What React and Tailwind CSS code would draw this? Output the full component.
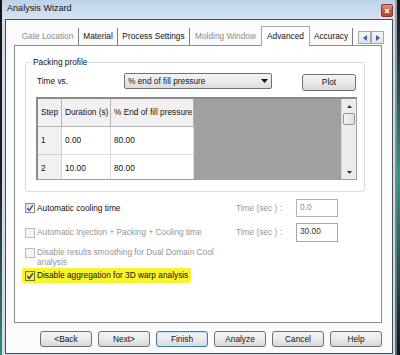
import React from "react";

const TABS = [
  { label: "Gate Location", cls: "w-[62px] border-r border-[#7d7d7d] text-[#8c8c8c]" },
  { label: "Material", cls: "w-[39px] border-r border-[#7d7d7d] text-[#111]" },
  { label: "Process Settings", cls: "w-[72px] border-r border-[#7d7d7d] text-[#111]" },
  { label: "Molding Window", cls: "w-[71px] text-[#8c8c8c]" },
];

const ROWS = [
  { step: "1", dur: "0.00", pct: "80.00" },
  { step: "2", dur: "10.00", pct: "80.00" },
];

const Check = ({ checked = false, disabled = false, onYellow = false }) => {
  const box = disabled
    ? "border-[#bcbcbc] bg-[#f5f5f5]"
    : onYellow
    ? "border-[#77772e] bg-[#eeee5a]"
    : "border-[#8e8f8f] bg-gradient-to-br from-[#dadada] to-[#fcfcfc]";
  return (
    <span className={`flex h-[10px] w-[10px] shrink-0 items-center justify-center border ${box}`}>
      {checked && (
        <svg width="8" height="8" viewBox="0 0 8 8">
          <path
            d="M1.2 4.1 L3.2 6.3 L6.9 1.3"
            fill="none"
            stroke={onYellow ? "#3b3b12" : "#2a4ea6"}
            strokeWidth="1.4"
          />
        </svg>
      )}
    </span>
  );
};

const Button = ({ children, focus = false }) => (
  <div
    className={`flex h-[16px] w-[52px] items-center justify-center rounded-[3px] border bg-gradient-to-b from-[#f4f4f4] via-[#ebebeb] to-[#d8d8d8] text-[#111] ${
      focus ? "border-[#3c7fb1] shadow-[inset_0_0_0_1px_#bfe3f7]" : "border-[#707070]"
    }`}
  >
    {children}
  </div>
);

const Arrow = ({ dir }) => (
  <div className="flex h-[13px] w-[13px] items-center justify-center border border-[#a9a9a9] bg-gradient-to-b from-[#f6f6f6] to-[#e3e3e3]">
    <svg width="4" height="6" viewBox="0 0 4 6">
      <path d={dir === "left" ? "M4 0 L0 3 L4 6 Z" : "M0 0 L4 3 L0 6 Z"} fill="#3363a8" />
    </svg>
  </div>
);

export default function App() {
  return (
    <div className="flex h-[355px] w-[400px] overflow-hidden bg-black font-['Liberation_Sans',Arial,sans-serif] text-[8.3px] leading-none">
      {/* desktop edge */}
      <div className="w-[2px] shrink-0 bg-gradient-to-b from-[#151515] via-[#1c1c1c] to-[#2f8d78]" />

      {/* window */}
      <div className="flex w-[393px] shrink-0 flex-col bg-[#d3dde8]">
        {/* title bar */}
        <div className="flex h-[19px] shrink-0 items-start justify-between bg-gradient-to-b from-[#bcd2ea] via-[#cadcef] to-[#d6e4f2] pl-[5px] pr-[2px]">
          <span className="mt-[4px] text-[9.1px] text-[#111]">Analysis Wizard</span>
          <div className="mt-[4px] flex h-[13px] w-[12px] items-center justify-center rounded-[2px] border border-[#8b3a2b] bg-gradient-to-b from-[#e8917c] via-[#d0563d] to-[#c1432c]">
            <svg width="6" height="6" viewBox="0 0 6 6">
              <path d="M1 1 L5 5 M5 1 L1 5" stroke="#fff" strokeWidth="1.5" />
            </svg>
          </div>
        </div>

        <div className="flex flex-1">
          <div className="w-[3px] shrink-0" />
          {/* client area */}
          <div className="flex h-[335px] w-[388px] shrink-0 flex-col border border-[#3f4d5c] bg-[#fbfbfb]">
            {/* tab strip */}
            <div className="ml-[11px] mt-[6px] flex h-[19px] items-end">
              {TABS.map((t) => (
                <div key={t.label} className={`flex h-[17px] items-center justify-center ${t.cls}`}>
                  {t.label}
                </div>
              ))}
              <div className="relative z-10 -mb-px flex h-[20px] w-[49px] items-center justify-center border border-b-0 border-[#a7a7a7] bg-white text-[#111]">
                Advanced
              </div>
              <div className="flex h-[17px] w-[43px] items-center justify-center border-r border-[#7d7d7d] text-[#111]">
                Accuracy
              </div>
              <div className="mb-[1px] ml-[5px] flex">
                <Arrow dir="left" />
                <Arrow dir="right" />
              </div>
            </div>

            {/* tab page */}
            <div className="ml-[8px] flex h-[278px] w-[368px] flex-col border border-[#8a8d94] bg-white">
              {/* packing profile group */}
              <div className="relative ml-[10px] mt-[16px] h-[130px] w-[340px] rounded-[3px] border border-[#d5dfe6]">
                <span className="absolute -top-[5px] left-[6px] bg-white px-[1px] text-[#111]">Packing profile</span>

                <div className="mt-[10px] flex h-[18px] items-start pl-[11px]">
                  <div className="flex h-[16px] w-[87px] items-center text-[#111]">Time vs.</div>
                  <div className="flex h-[16px] w-[148px] items-center justify-between rounded-[2px] border border-[#707070] bg-gradient-to-b from-[#f3f3f3] via-[#ececec] to-[#dcdcdc] pl-[3px] pr-[3px] text-[#111]">
                    <span>% end of fill pressure</span>
                    <svg width="7" height="4" viewBox="0 0 7 4">
                      <path d="M0 0 L7 0 L3.5 4 Z" fill="#111" />
                    </svg>
                  </div>
                  <div className="ml-[30px] mt-[1px]">
                    <div className="flex h-[17px] w-[54px] items-center justify-center rounded-[3px] border border-[#707070] bg-gradient-to-b from-[#f4f4f4] via-[#ebebeb] to-[#d8d8d8] text-[#111]">
                      Plot
                    </div>
                  </div>
                </div>

                {/* table */}
                <div className="ml-[10px] mt-[6px] flex h-[83px] w-[321px] overflow-hidden border-b border-l-2 border-r border-t-2 border-b-[#a0a0a0] border-l-[#8a8a8a] border-r-[#a0a0a0] border-t-[#8a8a8a] text-[#111]">
                  <div className="flex w-[156px] shrink-0 flex-col">
                    <div className="flex h-[28px] shrink-0 bg-[#f1f1f1]">
                      <div className="flex w-[24px] items-center border-b border-r border-[#b4b4b4] pl-[3px]">Step</div>
                      <div className="flex w-[49px] items-center border-b border-r border-[#b4b4b4] pl-[3px]">Duration (s)</div>
                      <div className="flex w-[83px] items-center border-b border-r border-[#b4b4b4] pl-[3px]">% End of fill pressure</div>
                    </div>
                    {ROWS.map((r) => (
                      <div key={r.step} className="flex h-[28px] shrink-0">
                        <div className="flex w-[24px] items-center border-b border-r border-[#cfcfcf] bg-[#f1f1f1] pl-[3px]">{r.step}</div>
                        <div className="flex w-[49px] items-center border-b border-r border-[#dcdcdc] bg-white pl-[3px]">{r.dur}</div>
                        <div className="flex w-[83px] items-center border-b border-r border-[#dcdcdc] bg-white pl-[3px]">{r.pct}</div>
                      </div>
                    ))}
                  </div>
                  <div className="w-[147px] shrink-0 bg-[#a0a0a0]" />
                  <div className="flex w-[15px] shrink-0 flex-col items-center border-l border-[#dadada] bg-[#ececec]">
                    <div className="flex h-[14px] items-center">
                      <svg width="5" height="3" viewBox="0 0 5 3">
                        <path d="M0 3 L2.5 0 L5 3 Z" fill="#333" />
                      </svg>
                    </div>
                    <div className="h-[12px] w-[12px] rounded-[2px] border border-[#959595] bg-gradient-to-r from-[#f4f4f4] to-[#dedede]" />
                    <div className="flex-1" />
                    <div className="flex h-[14px] items-center">
                      <svg width="5" height="3" viewBox="0 0 5 3">
                        <path d="M0 0 L5 0 L2.5 3 Z" fill="#333" />
                      </svg>
                    </div>
                  </div>
                </div>
              </div>

              {/* options */}
              <div className="ml-[10px] mt-[7px] flex h-[18px] items-center">
                <div className="flex w-[211px] items-center gap-[2px]">
                  <Check checked />
                  <span className="text-[#111]">Automatic cooling time</span>
                </div>
                <span className="w-[60px] text-[#959595]">Time (sec ) :</span>
                <div className="flex h-[18px] w-[42px] items-start border border-[#b3b3b3] bg-white pl-[3px] pt-[3px] text-[#8a8a8a]">
                  0.0
                </div>
              </div>

              <div className="ml-[10px] mt-[6px] flex h-[19px] items-center">
                <div className="flex w-[211px] items-center gap-[2px] whitespace-nowrap">
                  <Check disabled />
                  <span className="text-[#959595]">Automatic Injection + Packing + Cooling time</span>
                </div>
                <span className="w-[60px] text-[#959595]">Time (sec ) :</span>
                <div className="flex h-[19px] w-[42px] items-start border border-[#a6a6a6] bg-white pl-[3px] pt-[3px] text-[#333]">
                  30.00
                </div>
              </div>

              <div className="ml-[10px] mt-[5px] flex items-start gap-[2px]">
                <div className="mt-[1px]">
                  <Check disabled />
                </div>
                <span className="leading-[10px] text-[#959595]">
                  Disable results smoothing for Dual Domain Cool
                  <br />
                  analysis
                </span>
              </div>

              <div className="ml-[7px] mt-[1px] flex h-[15px] w-[169px] items-center gap-[2px] rounded-[2px] bg-[#f8f52c] pl-[3px]">
                <Check checked onYellow />
                <span className="whitespace-nowrap text-[#111]">Disable aggregation for 3D warp analysis</span>
              </div>
            </div>

            {/* buttons */}
            <div className="ml-[34px] mt-[8px] flex gap-[6px]">
              <Button>&lt;Back</Button>
              <Button>Next&gt;</Button>
              <Button focus>Finish</Button>
              <Button>Analyze</Button>
              <Button>Cancel</Button>
              <Button>Help</Button>
            </div>
          </div>
          <div className="w-[2px] shrink-0" />
        </div>
      </div>

      {/* desktop edge */}
      <div className="flex w-[5px] shrink-0">
        <div className="w-[2px] bg-gradient-to-b from-[#9aa3ab] to-[#5f6a70]" />
        <div className="w-[3px] bg-gradient-to-b from-[#141414] via-[#2b9d86] to-[#121a18]" />
      </div>
    </div>
  );
}
